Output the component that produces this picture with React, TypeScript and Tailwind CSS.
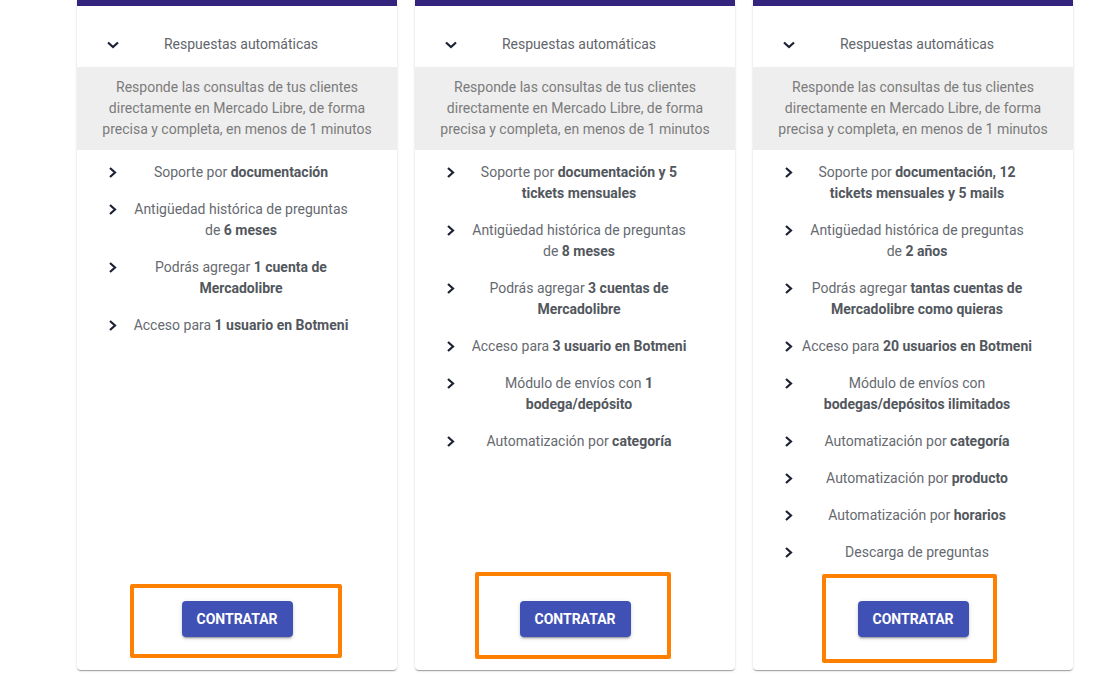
type Seg = { t: string; b?: boolean }
type Item = Seg[][]

const plans: Item[][] = [
  [
    [[{ t: 'Soporte por ' }, { t: 'documentación', b: true }]],
    [[{ t: 'Antigüedad histórica de preguntas' }], [{ t: 'de ' }, { t: '6 meses', b: true }]],
    [[{ t: 'Podrás agregar ' }, { t: '1 cuenta de', b: true }], [{ t: 'Mercadolibre', b: true }]],
    [[{ t: 'Acceso para ' }, { t: '1 usuario en Botmeni', b: true }]],
  ],
  [
    [[{ t: 'Soporte por ' }, { t: 'documentación y 5', b: true }], [{ t: 'tickets mensuales', b: true }]],
    [[{ t: 'Antigüedad histórica de preguntas' }], [{ t: 'de ' }, { t: '8 meses', b: true }]],
    [[{ t: 'Podrás agregar ' }, { t: '3 cuentas de', b: true }], [{ t: 'Mercadolibre', b: true }]],
    [[{ t: 'Acceso para ' }, { t: '3 usuario en Botmeni', b: true }]],
    [[{ t: 'Módulo de envíos con ' }, { t: '1', b: true }], [{ t: 'bodega/depósito', b: true }]],
    [[{ t: 'Automatización por ' }, { t: 'categoría', b: true }]],
  ],
  [
    [[{ t: 'Soporte por ' }, { t: 'documentación, 12', b: true }], [{ t: 'tickets mensuales y 5 mails', b: true }]],
    [[{ t: 'Antigüedad histórica de preguntas' }], [{ t: 'de ' }, { t: '2 años', b: true }]],
    [[{ t: 'Podrás agregar ' }, { t: 'tantas cuentas de', b: true }], [{ t: 'Mercadolibre como quieras', b: true }]],
    [[{ t: 'Acceso para ' }, { t: '20 usuarios en Botmeni', b: true }]],
    [[{ t: 'Módulo de envíos con' }], [{ t: 'bodegas/depósitos ilimitados', b: true }]],
    [[{ t: 'Automatización por ' }, { t: 'categoría', b: true }]],
    [[{ t: 'Automatización por ' }, { t: 'producto', b: true }]],
    [[{ t: 'Automatización por ' }, { t: 'horarios', b: true }]],
    [[{ t: 'Descarga de preguntas' }]],
  ],
]

function ChevronRight() {
  return (
    <svg width="16" height="21" viewBox="0 0 16 21" className="shrink-0">
      <polyline points="5,6 10,10.5 5,15" fill="none" stroke="#1c2233" strokeWidth="2.2" />
    </svg>
  )
}

function ChevronDown() {
  return (
    <svg width="16" height="21" viewBox="0 0 16 21" className="shrink-0">
      <polyline points="3,8.5 8,13 13,8.5" fill="none" stroke="#1c2233" strokeWidth="2.2" />
    </svg>
  )
}

function PlanCard({ items }: { items: Item[] }) {
  return (
    <div className="w-[320px] h-[670px] bg-white rounded-b-[4px] flex flex-col shadow-[0_2px_1px_-1px_rgba(0,0,0,0.2),0_1px_1px_0_rgba(0,0,0,0.14),0_1px_3px_0_rgba(0,0,0,0.12)]">
      <div className="h-[6px] bg-[#35247e]" />
      <div className="flex items-start pl-[28px] pt-[28px] pb-[12px]">
        <ChevronDown />
        <div className="w-[240px] text-center text-[#62666b]">Respuestas automáticas</div>
      </div>
      <div className="bg-[#eeeeee] py-[10px] text-center text-[#7b7b7b]">
        <div>Responde las consultas de tus clientes</div>
        <div>directamente en Mercado Libre, de forma</div>
        <div>precisa y completa, en menos de 1 minutos</div>
      </div>
      <div className="pt-[12px] flex flex-col gap-[16px]">
        {items.map((lines, i) => (
          <div key={i} className="flex items-start pl-[28px]">
            <ChevronRight />
            <div className="w-[240px] text-center text-[#666a70]">
              {lines.map((line, j) => (
                <div key={j}>
                  {line.map((s, k) =>
                    s.b ? (
                      <span key={k} className="font-bold text-[#52575d]">{s.t}</span>
                    ) : (
                      <span key={k}>{s.t}</span>
                    )
                  )}
                </div>
              ))}
            </div>
          </div>
        ))}
      </div>
      <div className="mt-auto pb-[33px] flex justify-center">
        <button className="h-[36px] w-[111px] rounded-[4px] bg-[#3f51b5] text-white font-bold text-[14px] shadow-[0_3px_1px_-2px_rgba(0,0,0,0.2),0_2px_2px_0_rgba(0,0,0,0.14),0_1px_5px_0_rgba(0,0,0,0.12)]">
          CONTRATAR
        </button>
      </div>
    </div>
  )
}

export default function App() {
  return (
    <div className="relative w-[1103px] h-[689px] bg-white overflow-hidden font-['Roboto',sans-serif] text-[14px] leading-[21px]">
      <div className="flex gap-[18px] pl-[77px]">
        {plans.map((items, i) => (
          <PlanCard key={i} items={items} />
        ))}
      </div>
      {/* highlight boxes over the buttons */}
      <div className="absolute left-[130px] top-[584px] w-[212px] h-[74px] border-[4px] border-[#ff8000] rounded-[2px] pointer-events-none" />
      <div className="absolute left-[475px] top-[572px] w-[196px] h-[87px] border-[4px] border-[#ff8000] rounded-[2px] pointer-events-none" />
      <div className="absolute left-[822px] top-[574px] w-[175px] h-[89px] border-[4px] border-[#ff8000] rounded-[2px] pointer-events-none" />
    </div>
  )
}
